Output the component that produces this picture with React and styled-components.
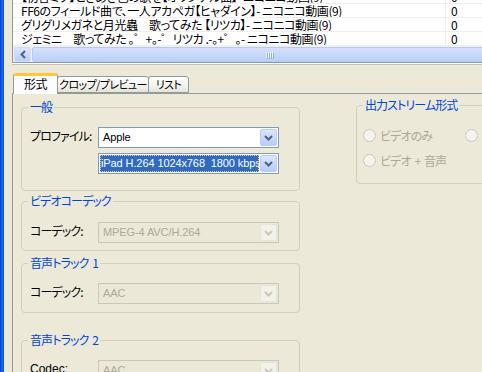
import React from 'react'
import styled, { createGlobalStyle } from 'styled-components'

const JP = `"Noto Sans CJK JP", "Liberation Sans", sans-serif`
const UI = `"Liberation Sans", "Noto Sans CJK JP", sans-serif`

const GlobalStyle = createGlobalStyle`
    html, body {
        margin: 0;
        padding: 0;
        background: #ece9d8;
        overflow: hidden;
    }
    body {
        font-family: ${UI};
        font-size: 11px;
    }
`

const Window = styled.div`
    display: flex;
    width: 482px;
    height: 372px;
    overflow: hidden;
    background: #ece9d8;
`

const Frame = styled.div`
    flex: none;
    width: 4px;
    background: linear-gradient(to right, #0a3fd0, #1668ef 60%, #0c55e4);
`

const Body = styled.div`
    flex: 1;
    min-width: 0;
    display: flex;
    flex-direction: column;
    padding-left: 8px;
`

const ListView = styled.div`
    margin-right: -40px;
    border-left: 1px solid #7f9db9;
    border-bottom: 1px solid #7f9db9;
    box-shadow: 0 1px 0 #fff, 0 2px 0 #c4c1b0;
    background: #fff;
`

const Rows = styled.div`
    height: 46px;
    overflow: hidden;
`

const RowsInner = styled.div`
    margin-top: -10px;
`

const Row = styled.div`
    box-sizing: border-box;
    display: grid;
    grid-template-columns: 432px 1fr;
    height: 14px;
    border-bottom: 1px solid #efefef;
    font-family: ${JP};
    font-feature-settings: 'palt';
    font-size: 12px;
    letter-spacing: -0.45px;
    line-height: 13px;
    color: #000;
    white-space: pre;
`

const Cell = styled.div`
    overflow: hidden;
    padding-left: ${(p) => p.$pad}px;
    border-left: ${(p) => (p.$divider ? '1px solid #efefef' : 'none')};
`

const HScroll = styled.div`
    display: flex;
    height: 16px;
    background: #f3f1ec;
    overflow: hidden;
`

const ScrollBtn = styled.div`
    flex: none;
    box-sizing: border-box;
    width: 17px;
    height: 15px;
    margin: 1px 1px 0 1px;
    border: 1px solid #d2ddf7;
    border-radius: 2px;
    background: linear-gradient(#dbe5fd, #bccff9);
    display: flex;
    align-items: center;
    justify-content: center;
`

const Thumb = styled.div`
    flex: none;
    box-sizing: border-box;
    width: 474px;
    margin-top: 1px;
    height: 15px;
    border: 1px solid #b5c9f3;
    border-radius: 2px;
    background: linear-gradient(#d5e1fc, #bccff9);
    display: flex;
    align-items: center;
    justify-content: center;
`

const Grip = styled.div`
    display: flex;
    gap: 1px;
    & > span {
        width: 1px;
        height: 6px;
        background: #eef4fe;
        box-shadow: 1px 1px 0 #8caef0;
    }
`

const TabBar = styled.div`
    display: flex;
    align-items: flex-end;
    height: 20px;
    margin-top: 10px;
    padding-left: 1px;
    position: relative;
    z-index: 1;
`

const Tab = styled.div`
    box-sizing: border-box;
    width: ${(p) => p.$w}px;
    height: ${(p) => (p.$active ? 21 : 17)}px;
    margin-bottom: ${(p) => (p.$active ? -1 : 0)}px;
    margin-left: ${(p) => (p.$active ? 0 : -1)}px;
    border: 1px solid #919b9c;
    border-bottom: ${(p) => (p.$active ? 'none' : '1px solid #919b9c')};
    border-top: ${(p) => (p.$active ? '3px solid #ffc83c' : '1px solid #919b9c')};
    border-radius: 3px 3px 0 0;
    background: ${(p) => (p.$active ? '#fcfcfe' : 'linear-gradient(#ffffff, #f0efe8 70%, #e4e2d6)')};
    font-family: ${JP};
    font-feature-settings: 'palt';
    font-size: ${(p) => (p.$active ? 12 : 11)}px;
    letter-spacing: -0.6px;
    line-height: ${(p) => (p.$active ? 16 : 15)}px;
    text-align: center;
    color: #000;
    white-space: nowrap;
`

const Panel = styled.div`
    flex: 1;
    border-top: 1px solid #919b9c;
    border-left: 1px solid #919b9c;
    margin-right: -80px;
    padding: 7px 0 0 8px;
    display: grid;
    grid-template-columns: 279px 220px;
    column-gap: 56px;
    align-items: start;
`

const Column = styled.div`
    display: flex;
    flex-direction: column;
    margin-top: ${(p) => p.$mt || 0}px;
`

const Group = styled.fieldset`
    box-sizing: border-box;
    min-width: 0;
    margin: ${(p) => p.$mt || 0}px 0 0;
    padding: ${(p) => p.$pt}px 0 ${(p) => p.$pb}px 6px;
    border: 1px solid #d0d0bf;
    border-radius: 4px;
`

const Legend = styled.legend`
    padding: 0 2px;
    color: #0046d5;
    font-family: ${JP};
    font-feature-settings: 'palt';
    font-size: 12px;
    letter-spacing: -0.9px;
    word-spacing: 2px;
    line-height: 12px;
`

const FieldRow = styled.div`
    display: flex;
    align-items: center;
    margin-top: ${(p) => p.$mt || 0}px;
`

const FieldLabel = styled.div`
    flex: none;
    width: 70px;
    padding-left: 2px;
    box-sizing: border-box;
    font-family: ${(p) => (p.$latin ? UI : JP)};
    font-feature-settings: 'palt';
    font-size: 12px;
    letter-spacing: ${(p) => (p.$latin ? 0 : -0.9)}px;
    line-height: 14px;
    color: #000;
    margin-top: -4px;
`

const Combo = styled.div`
    box-sizing: border-box;
    display: flex;
    align-items: center;
    width: 181px;
    height: 21px;
    padding: 1px;
    border: 1px solid ${(p) => (p.$disabled ? '#c9c7ba' : '#7f9db9')};
    background: ${(p) => (p.$disabled ? '#ebe8d7' : '#fff')};
`

const ComboText = styled.div`
    flex: 1;
    min-width: 0;
    overflow: hidden;
    white-space: pre;
    font-family: ${UI};
    font-size: 11px;
    letter-spacing: -0.1px;
    line-height: 17px;
    height: 17px;
    padding-left: ${(p) => (p.$selected ? 1 : 3)}px;
    margin-right: 1px;
    color: ${(p) => (p.$disabled ? '#aca899' : p.$selected ? '#fff' : '#000')};
    background: ${(p) => (p.$selected ? '#316ac5' : 'transparent')};
    outline: ${(p) => (p.$selected ? '1px dotted #f7d27a' : 'none')};
    outline-offset: -1px;
`

const ComboBtn = styled.div`
    flex: none;
    box-sizing: border-box;
    width: 17px;
    height: 17px;
    border: 1px solid ${(p) => (p.$disabled ? '#e6e4da' : '#bccef6')};
    border-radius: 2px;
    background: ${(p) => (p.$disabled ? '#f2f1ea' : 'linear-gradient(#dce6fd, #b7cbf8)')};
    display: flex;
    align-items: center;
    justify-content: center;
`

const RadioRow = styled.div`
    display: flex;
    margin-top: ${(p) => p.$mt || 0}px;
`

const RadioItem = styled.div`
    flex: none;
    display: flex;
    align-items: center;
    gap: 4px;
    width: ${(p) => p.$w || 'auto'};
    font-family: ${JP};
    font-feature-settings: 'palt';
    font-size: 12px;
    letter-spacing: -0.9px;
    word-spacing: 2px;
    line-height: 13px;
    color: #aca899;
    white-space: nowrap;
`

const RadioCircle = styled.span`
    box-sizing: border-box;
    flex: none;
    width: 13px;
    height: 13px;
    border: 1px solid #cac8bb;
    border-radius: 50%;
    background: #f4f3ee;
`

function Chevron({ color, dir = 'down' }) {
    const points = dir === 'down' ? '1,1 4.5,4.5 8,1' : '5,1 1.5,4.5 5,8'
    const size = dir === 'down' ? { w: 9, h: 6 } : { w: 6, h: 9 }
    return (
        <svg width={size.w} height={size.h} viewBox={`0 0 ${size.w} ${size.h}`}>
            <polyline points={points} fill="none" stroke={color} strokeWidth="2" />
        </svg>
    )
}

function ComboBox({ value, disabled, selected }) {
    return (
        <Combo $disabled={disabled}>
            <ComboText $disabled={disabled} $selected={selected}>
                {value}
            </ComboText>
            <ComboBtn $disabled={disabled}>
                <Chevron color={disabled ? '#c9c7ba' : '#4d6185'} />
            </ComboBtn>
        </Combo>
    )
}

const videos = [
    '【初音ミク】ときめき色の歌を【オリジナル曲】- ニコニコ動画(9)',
    'FF6のフィールド曲で、一人アカペガ【ヒャダイン】- ニコニコ動画(9)',
    'グリグリメガネと月光蟲　歌ってみた 【リツカ】- ニコニコ動画(9)',
    'ジェミニ　歌ってみた 。゜+。-゜リツカ .-。+゜。- ニコニコ動画(9)',
]

export default function App() {
    return (
        <>
            <GlobalStyle />
            <Window>
                <Frame />
                <Body>
                    <ListView>
                        <Rows>
                            <RowsInner>
                                {videos.map((title) => (
                                    <Row key={title}>
                                        <Cell $pad={8}>{title}</Cell>
                                        <Cell $pad={5} $divider>
                                            0
                                        </Cell>
                                    </Row>
                                ))}
                            </RowsInner>
                        </Rows>
                        <HScroll>
                            <ScrollBtn>
                                <Chevron color="#4d6185" dir="left" />
                            </ScrollBtn>
                            <Thumb>
                                <Grip>
                                    <span />
                                    <span />
                                    <span />
                                    <span />
                                </Grip>
                            </Thumb>
                        </HScroll>
                    </ListView>

                    <TabBar>
                        <Tab $active $w={45}>
                            形式
                        </Tab>
                        <Tab $w={92}>クロップ/プレビュー</Tab>
                        <Tab $w={41}>リスト</Tab>
                    </TabBar>

                    <Panel>
                        <Column>
                            <Group $pt={14} $pb={16}>
                                <Legend>一般</Legend>
                                <FieldRow>
                                    <FieldLabel>プロファイル:</FieldLabel>
                                    <ComboBox value="Apple" />
                                </FieldRow>
                                <FieldRow $mt={5}>
                                    <FieldLabel />
                                    <ComboBox value="iPad H.264 1024x768  1800 kbps" selected />
                                </FieldRow>
                            </Group>
                            <Group $mt={4} $pt={15} $pb={7}>
                                <Legend>ビデオコーデック</Legend>
                                <FieldRow>
                                    <FieldLabel>コーデック:</FieldLabel>
                                    <ComboBox value="MPEG-4 AVC/H.264" disabled />
                                </FieldRow>
                            </Group>
                            <Group $mt={6} $pt={14} $pb={8}>
                                <Legend>音声トラック 1</Legend>
                                <FieldRow>
                                    <FieldLabel>コーデック:</FieldLabel>
                                    <ComboBox value="AAC" disabled />
                                </FieldRow>
                            </Group>
                            <Group $mt={21} $pt={14} $pb={8}>
                                <Legend>音声トラック 2</Legend>
                                <FieldRow>
                                    <FieldLabel $latin>Codec:</FieldLabel>
                                    <ComboBox value="AAC" disabled />
                                </FieldRow>
                            </Group>
                        </Column>
                        <Column $mt={-2}>
                            <Group $pt={18} $pb={16}>
                                <Legend>出力ストリーム形式</Legend>
                                <RadioRow>
                                    <RadioItem $w="102px">
                                        <RadioCircle />
                                        ビデオのみ
                                    </RadioItem>
                                    <RadioItem>
                                        <RadioCircle />
                                        オーディオのみ
                                    </RadioItem>
                                </RadioRow>
                                <RadioRow $mt={12}>
                                    <RadioItem>
                                        <RadioCircle />
                                        ビデオ + 音声
                                    </RadioItem>
                                </RadioRow>
                            </Group>
                        </Column>
                    </Panel>
                </Body>
            </Window>
        </>
    )
}
